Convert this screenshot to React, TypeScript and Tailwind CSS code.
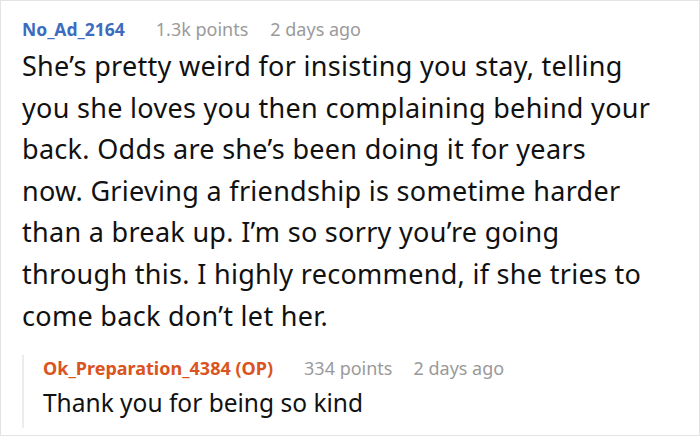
const lines = [
  "She’s pretty weird for insisting you stay, telling",
  "you she loves you then complaining behind your",
  "back. Odds are she’s been doing it for years",
  "now. Grieving a friendship is sometime harder",
  "than a break up. I’m so sorry you’re going",
  "through this. I highly recommend, if she tries to",
  "come back don’t let her.",
];

export default function App() {
  return (
    <div className="w-[700px] h-[436px] bg-white border border-[#e3e3e3] box-border overflow-hidden" style={{ fontFamily: '"Noto Sans", sans-serif' }}>
      <div className="pl-[21px] pt-[14px]">
        <div className="flex items-baseline text-[18px] leading-[28px]">
          <span className="font-bold text-[17.5px] text-[#3b6cc0]">No_Ad_2164</span>
          <span className="ml-[31px] text-[#9a9a9a]">1.3k points</span>
          <span className="ml-[22px] text-[#9a9a9a]">2 days ago</span>
        </div>
        <p className="mt-[2px] text-[27px] tracking-[0.3px] leading-[41.6px] text-[#111] whitespace-nowrap">
          {lines.map((l, i) => (
            <span key={i} className="block">{l}</span>
          ))}
        </p>
        <div className="mt-[19px] border-l-2 border-[#ececec] pl-[19px] pb-[6px]">
          <div className="flex items-baseline text-[18px] leading-[26px]">
            <span className="font-bold text-[#d9541e]">Ok_Preparation_4384 (OP)</span>
            <span className="ml-[31px] text-[#9a9a9a]">334 points</span>
            <span className="ml-[21px] text-[#9a9a9a]">2 days ago</span>
          </div>
          <p className="mt-[3px] text-[24.5px] leading-[38px] text-[#111]">Thank you for being so kind</p>
        </div>
      </div>
    </div>
  );
}
